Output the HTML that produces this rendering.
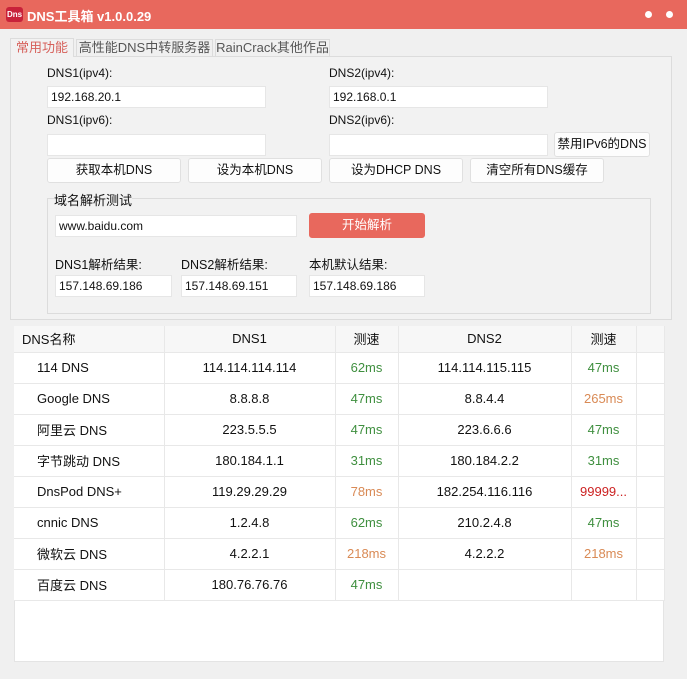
<!DOCTYPE html>
<html><head><meta charset="utf-8"><style>
*{box-sizing:border-box;margin:0;padding:0}
body{width:687px;height:679px;background:#f0f0f0;font-family:"Liberation Sans","Noto Sans CJK SC",sans-serif;font-size:12px;color:#111;position:relative;overflow:hidden}
.a{position:absolute}
.title{left:0;top:0;width:687px;height:29px;background:#e8685d;color:#fff;font-weight:bold;font-size:13px}
.inp{position:absolute;background:#fff;border:1px solid #e6e6e6;height:22px;line-height:20px;padding-left:3px;font-size:12px}
.btn{position:absolute;background:#fdfdfd;border:1px solid #e0e0e0;border-radius:3px;height:25px;line-height:23px;text-align:center;font-size:12.5px}
.lbl{position:absolute;font-size:12px}
table{position:absolute;left:14px;top:326px;border-collapse:collapse;background:#fff;font-size:13px}
td{height:31px;border-right:1px solid #e8e8e8;border-bottom:1px solid #e8e8e8;text-align:center;padding:0}
tr.h td{height:26px;background:#f7f7f7}
.g{color:#3f8f3f}.o{color:#d98a55}.r{color:#cc2222}
</style></head><body>
<div class="a title"><div class="a" style="left:6px;top:7px;width:17px;height:15px;background:#c8223a;border-radius:3px;font-size:8px;line-height:15px;text-align:center;color:#fff">Dns</div><div class="a" style="left:27px;top:6px">DNS工具箱 v1.0.0.29</div>
<div class="a" style="left:645px;top:11px;width:7px;height:7px;border-radius:50%;background:#fff"></div><div class="a" style="left:666px;top:11px;width:7px;height:7px;border-radius:50%;background:#fff"></div></div>
<div class="a" style="left:10px;top:56px;width:662px;height:264px;border:1px solid #dcdcdc;background:#f2f2f2"></div>
<div class="a" style="left:10px;top:38px;width:64px;height:19px;border:1px solid #dcdcdc;border-bottom:none;background:#f2f2f2;color:#d6605a;font-size:13px;text-align:center;line-height:18px">常用功能</div>
<div class="a" style="left:76px;top:39px;width:137px;height:17px;border:1px solid #dcdcdc;border-bottom:none;color:#555;font-size:13px;text-align:center;line-height:16px">高性能DNS中转服务器</div>
<div class="a" style="left:215px;top:39px;width:115px;height:17px;border:1px solid #dcdcdc;border-bottom:none;color:#555;font-size:13px;text-align:center;line-height:16px">RainCrack其他作品</div>
<div class="lbl" style="left:47px;top:66px">DNS1(ipv4):</div><div class="lbl" style="left:329px;top:66px">DNS2(ipv4):</div>
<div class="inp" style="left:47px;top:86px;width:219px">192.168.20.1</div><div class="inp" style="left:329px;top:86px;width:219px">192.168.0.1</div>
<div class="lbl" style="left:47px;top:113px">DNS1(ipv6):</div><div class="lbl" style="left:329px;top:113px">DNS2(ipv6):</div>
<div class="inp" style="left:47px;top:134px;width:219px"></div><div class="inp" style="left:329px;top:134px;width:219px"></div>
<div class="btn" style="left:554px;top:132px;width:96px">禁用IPv6的DNS</div>
<div class="btn" style="left:47px;top:158px;width:134px">获取本机DNS</div><div class="btn" style="left:188px;top:158px;width:134px">设为本机DNS</div><div class="btn" style="left:329px;top:158px;width:134px">设为DHCP DNS</div><div class="btn" style="left:470px;top:158px;width:134px">清空所有DNS缓存</div>
<div class="a" style="left:47px;top:198px;width:604px;height:116px;border:1px solid #dcdcdc"></div>
<div class="lbl" style="left:54px;top:190px;background:#f2f2f2;font-size:13px">域名解析测试</div>
<div class="inp" style="left:55px;top:215px;width:242px">www.baidu.com</div>
<div class="btn" style="left:309px;top:213px;width:116px;background:#e8685d;border-color:#e8685d;color:#fff;line-height:23px">开始解析</div>
<div class="lbl" style="left:55px;top:254px;font-size:12.5px">DNS1解析结果:</div><div class="lbl" style="left:181px;top:254px;font-size:12.5px">DNS2解析结果:</div><div class="lbl" style="left:309px;top:254px;font-size:12.5px">本机默认结果:</div>
<div class="inp" style="left:55px;top:275px;width:117px">157.148.69.186</div><div class="inp" style="left:181px;top:275px;width:116px">157.148.69.151</div><div class="inp" style="left:309px;top:275px;width:116px">157.148.69.186</div>
<div class="a" style="left:14px;top:326px;width:650px;height:336px;background:#fff;border:1px solid #e4e4e4"></div>
<table>
<colgroup><col style="width:150px"><col style="width:171px"><col style="width:63px"><col style="width:173px"><col style="width:65px"><col style="width:28px"></colgroup>
<tr class="h"><td style="text-align:left;padding-left:8px">DNS名称</td><td>DNS1</td><td>测速</td><td>DNS2</td><td>测速</td><td></td></tr>
<tr><td style="text-align:left;padding-left:23px">114 DNS</td><td>114.114.114.114</td><td class="g">62ms</td><td>114.114.115.115</td><td class="g">47ms</td><td></td></tr>
<tr><td style="text-align:left;padding-left:23px">Google DNS</td><td>8.8.8.8</td><td class="g">47ms</td><td>8.8.4.4</td><td class="o">265ms</td><td></td></tr>
<tr><td style="text-align:left;padding-left:23px">阿里云 DNS</td><td>223.5.5.5</td><td class="g">47ms</td><td>223.6.6.6</td><td class="g">47ms</td><td></td></tr>
<tr><td style="text-align:left;padding-left:23px">字节跳动 DNS</td><td>180.184.1.1</td><td class="g">31ms</td><td>180.184.2.2</td><td class="g">31ms</td><td></td></tr>
<tr><td style="text-align:left;padding-left:23px">DnsPod DNS+</td><td>119.29.29.29</td><td class="o">78ms</td><td>182.254.116.116</td><td class="r">99999...</td><td></td></tr>
<tr><td style="text-align:left;padding-left:23px">cnnic DNS</td><td>1.2.4.8</td><td class="g">62ms</td><td>210.2.4.8</td><td class="g">47ms</td><td></td></tr>
<tr><td style="text-align:left;padding-left:23px">微软云 DNS</td><td>4.2.2.1</td><td class="o">218ms</td><td>4.2.2.2</td><td class="o">218ms</td><td></td></tr>
<tr><td style="text-align:left;padding-left:23px">百度云 DNS</td><td>180.76.76.76</td><td class="g">47ms</td><td></td><td></td><td></td></tr>
</table>
</body></html>
